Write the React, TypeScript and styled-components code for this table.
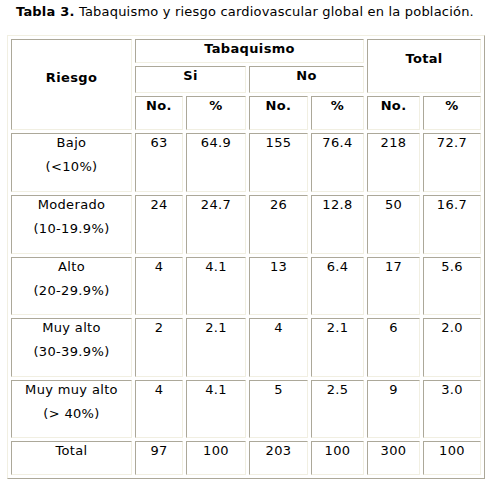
import React from 'react';
import styled, { createGlobalStyle } from 'styled-components';

const GlobalStyle = createGlobalStyle`
  html, body {
    margin: 0;
    padding: 0;
    background: #ffffff;
  }

  body {
    font-family: "DejaVu Sans", Verdana, sans-serif;
    font-size: 13px;
    letter-spacing: 0.2px;
    color: #000000;
  }
`;

interface BodyRow {
  label: string;
  range?: string;
  values: string[];
  height: number;
}

const columns = [121, 48, 60, 59, 53, 53, 58];

const bodyRows: BodyRow[] = [
  { label: 'Bajo', range: '(<10%)', values: ['63', '64.9', '155', '76.4', '218', '72.7'], height: 59 },
  { label: 'Moderado', range: '(10-19.9%)', values: ['24', '24.7', '26', '12.8', '50', '16.7'], height: 59 },
  { label: 'Alto', range: '(20-29.9%)', values: ['4', '4.1', '13', '6.4', '17', '5.6'], height: 58 },
  { label: 'Muy alto', range: '(30-39.9%)', values: ['2', '2.1', '4', '2.1', '6', '2.0'], height: 59 },
  { label: 'Muy muy alto', range: '(> 40%)', values: ['4', '4.1', '5', '2.5', '9', '3.0'], height: 58 },
  { label: 'Total', values: ['97', '100', '203', '100', '300', '100'], height: 34 },
];

const App = () => {
  return (
    <Page>
      <GlobalStyle />
      <Caption>
        <b>Tabla 3.</b> Tabaquismo y riesgo cardiovascular global en la población.
      </Caption>
      <Table>
        <colgroup>
          {columns.map((w, i) => (
            <Col key={i} $w={w} />
          ))}
        </colgroup>
        <thead>
          <Row $h={24}>
            <Head rowSpan={3} $pt={30}>Riesgo</Head>
            <Head colSpan={4}>Tabaquismo</Head>
            <Head colSpan={2} rowSpan={2} $pt={11}>Total</Head>
          </Row>
          <Row $h={27}>
            <Head colSpan={2}>Si</Head>
            <Head colSpan={2}>No</Head>
          </Row>
          <Row $h={34}>
            <Head>No.</Head>
            <Head>%</Head>
            <Head>No.</Head>
            <Head>%</Head>
            <Head>No.</Head>
            <Head>%</Head>
          </Row>
        </thead>
        <tbody>
          {bodyRows.map((row) => (
            <Row key={row.label} $h={row.height}>
              <Cell>
                {row.label}
                {row.range && <Range>{row.range}</Range>}
              </Cell>
              {row.values.map((v, i) => (
                <Cell key={i}>{v}</Cell>
              ))}
            </Row>
          ))}
        </tbody>
      </Table>
    </Page>
  );
};

const Page = styled.div`
  padding: 4px 0 10px 7px;
`;

const Caption = styled.p`
  margin: 0 0 15px 9px;
  line-height: 16px;
  white-space: nowrap;

  b {
    font-weight: bold;
  }
`;

const Table = styled.table`
  box-sizing: border-box;
  width: 478px;
  table-layout: fixed;
  border-collapse: separate;
  border-spacing: 3px;
  border-style: solid;
  border-width: 1px;
  border-color: #f1efe2 #aca899 #aca899 #f1efe2;
`;

const Col = styled.col<{ $w: number }>`
  width: ${(p) => p.$w}px;
`;

const Row = styled.tr<{ $h: number }>`
  height: ${(p) => p.$h}px;
`;

const Cell = styled.td<{ $pt?: number }>`
  box-sizing: border-box;
  padding: ${(p) => p.$pt ?? 1}px 1px 1px;
  vertical-align: top;
  text-align: center;
  line-height: 15px;
  letter-spacing: 0.35px;
  white-space: nowrap;
  border-style: solid;
  border-width: 1px;
  border-color: #aca899 #f1efe2 #f1efe2 #aca899;
`;

const Head = styled(Cell).attrs({ as: 'th' })`
  font-weight: bold;
`;

const Range = styled.span`
  display: block;
  margin-top: 9px;
`;

export default App;
